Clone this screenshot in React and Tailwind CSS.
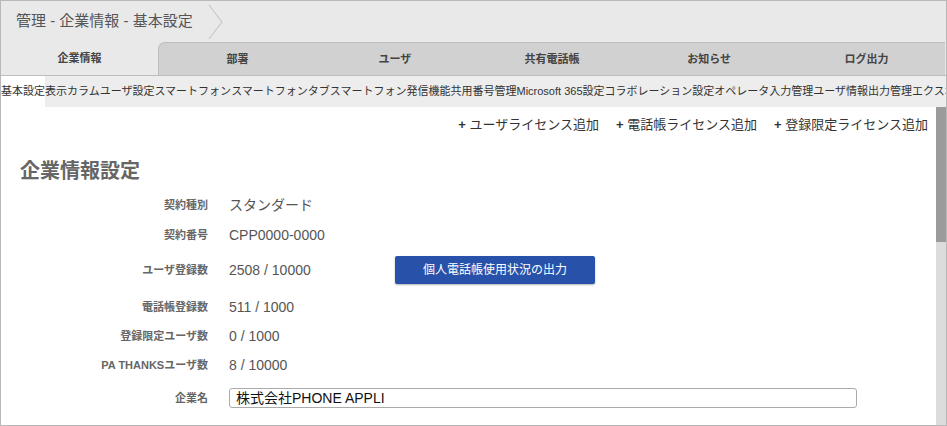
import React from 'react';

const font = { fontFamily: '"Liberation Sans", "Noto Sans CJK JP", sans-serif' };

const tabs = ['企業情報', '部署', 'ユーザ', '共有電話帳', 'お知らせ', 'ログ出力'];

const subnav = [
  '基本設定',
  '表示カラム',
  'ユーザ設定',
  'スマートフォン',
  'スマートフォンタブ',
  'スマートフォン発信機能',
  '共用番号管理',
  'Microsoft 365設定',
  'コラボレーション設定',
  'オペレータ入力管理',
  'ユーザ情報出力管理',
  'エクスポート',
];

const links = ['ユーザライセンス追加', '電話帳ライセンス追加', '登録限定ライセンス追加'];

function Row({ label, className, children }) {
  return (
    <div className={`flex items-center ${className}`}>
      <div className="w-[187px] shrink-0 text-right text-[11px] font-bold text-[#666]">{label}</div>
      <div className="ml-[21px] flex items-center text-[14px] text-[#555]">{children}</div>
    </div>
  );
}

export default function App() {
  return (
    <div style={font} className="w-[947px] h-[426px] overflow-hidden border border-[#b8b8b8] bg-white flex flex-col">
      <div className="bg-[#e9e9e9]">
        <div className="h-[41px] flex items-center pl-[15px]">
          <span className="text-[15px] text-[#555]">管理 - 企業情報 - 基本設定</span>
          <svg width="16" height="36" viewBox="0 0 16 36" className="ml-[15px] mt-[1px]">
            <path d="M1 1 L14 18 L1 35" fill="none" stroke="#bdbdbd" strokeWidth="1" />
          </svg>
        </div>
        <div className="flex h-[34px] border-b border-[#bdbdbd] pr-[1px]">
          <div className="w-[157px] flex items-center justify-center text-[11px] font-bold text-[#444]">
            {tabs[0]}
          </div>
          <div className="flex-1 flex bg-[#d1d1d1] border-t border-l border-[#bdbdbd] rounded-tl-[7px]">
            {tabs.slice(1).map((t) => (
              <div key={t} className="flex-1 flex items-center justify-center text-[11px] font-bold text-[#444]">
                {t}
              </div>
            ))}
          </div>
        </div>
      </div>
      <div className="h-[31px] shrink-0 bg-[#ededed] flex items-center whitespace-nowrap overflow-hidden">
        {subnav.map((s, i) => (
          <span
            key={s}
            className={`h-full flex items-center text-[11px] text-[#333] ${i === 0 ? 'bg-white' : ''}`}
          >
            {s}
          </span>
        ))}
      </div>
      <div className="flex-1 flex min-h-0">
        <div className="flex-1 min-w-0">
          <div className="flex justify-end gap-[17px] pt-[8px] pr-[8px] h-[30px]">
            {links.map((l) => (
              <span key={l} className="text-[13px] text-[#333] leading-[20px]">
                <span className="font-bold">+</span> {l}
              </span>
            ))}
          </div>
          <h2 className="mt-[20px] pl-[19px] text-[20px] leading-[28px] font-bold text-[#666]">企業情報設定</h2>
          <div className="pl-[20px] mt-[5px]">
            <Row label="契約種別" className="h-[30px]">スタンダード</Row>
            <Row label="契約番号" className="h-[30px]">CPP0000-0000</Row>
            <Row label="ユーザ登録数" className="h-[40px]">
              <span className="w-[166px]">2508 / 10000</span>
              <button className="w-[200px] h-[28px] rounded-[2px] bg-[#2852aa] text-white text-[12px] shadow-[0_1px_2px_rgba(0,0,0,0.3)]">
                個人電話帳使用状況の出力
              </button>
            </Row>
            <Row label="電話帳登録数" className="h-[34px]">511 / 1000</Row>
            <Row label="登録限定ユーザ数" className="h-[24px]">0 / 1000</Row>
            <Row label="PA THANKSユーザ数" className="h-[34px]">8 / 10000</Row>
            <Row label="企業名" className="h-[32px]">
              <div className="w-[628px] h-[20px] border border-[#aaa] rounded-[3px] pl-[6px] flex items-center text-[14px] text-[#111]">
                株式会社PHONE APPLI
              </div>
            </Row>
          </div>
        </div>
        <div className="w-[10px] shrink-0 bg-[#dcdcdc] flex flex-col">
          <div className="h-[135px] bg-[#9b9b9b]" />
        </div>
      </div>
    </div>
  );
}
